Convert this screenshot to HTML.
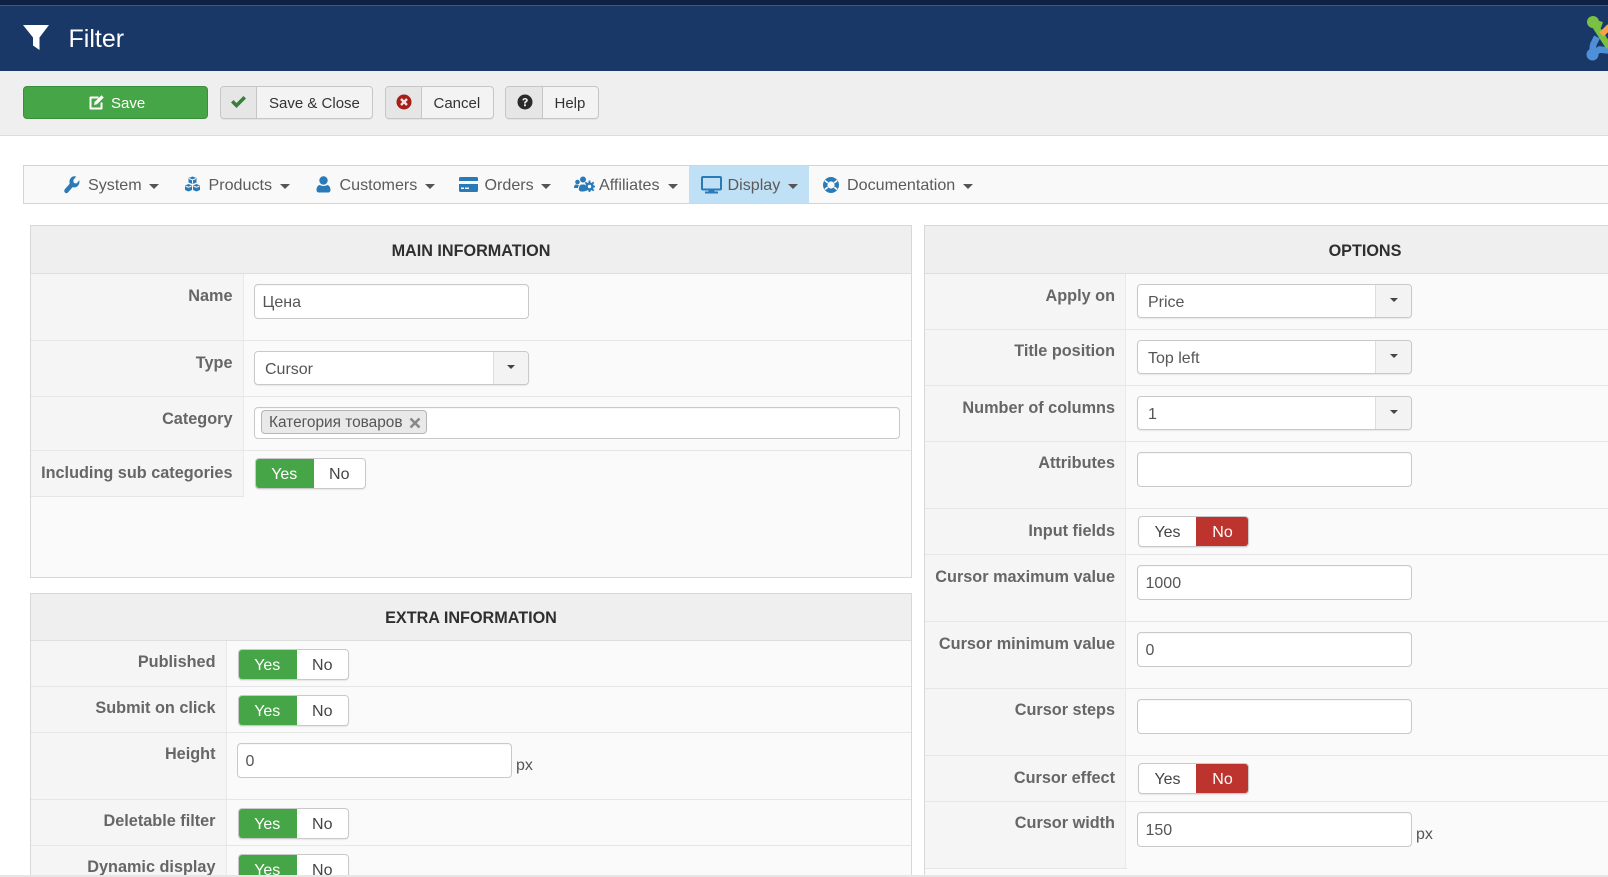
<!DOCTYPE html>
<html><head><meta charset="utf-8"><title>Filter</title>
<style>
html,body{margin:0;padding:0;width:1608px;height:877px;overflow:hidden;background:#fff}
body{font-family:"Liberation Sans","Noto Sans CJK SC",sans-serif;position:relative;color:#555;font-size:16px}
div,span,svg{position:absolute;box-sizing:border-box}
.t{white-space:nowrap;line-height:20px}
.tb{height:33px;top:86px;background:#f3f3f3;border:1px solid #c6c6c6;border-radius:4px;box-shadow:0 1px 0 #e4e4e4}
.ic{left:0;top:0;bottom:0;background:#e6e6e6;border-right:1px solid #c6c6c6;border-radius:3px 0 0 3px}
.tb .t{font-size:15px;color:#333;top:7px}
.m{font-size:16.1px;color:#5b5b5b;top:175px;white-space:nowrap;line-height:20px}
.c{width:0;height:0;border-left:5px solid transparent;border-right:5px solid transparent;border-top:5px solid #555;top:184px}
.p{background:#fafafa;border:1px solid #d8d8d8}
.h{background:#efefef;border-bottom:1px solid #dedede;left:0;right:0;top:0;height:48px}
.ht{font-weight:bold;font-size:16.2px;color:#2f2f2f;text-align:center;line-height:20px;white-space:nowrap}
.r{background:#e6e6e6;height:1px}
.lc{background:#f5f5f5;border-right:1px solid #e9e9e9}
.l{font-weight:bold;font-size:16.25px;color:#666;text-align:right;line-height:20px;white-space:nowrap}
.i{background:#fff;border:1px solid #c9c9c9;border-radius:4px;height:35px;font-size:16px;color:#555;line-height:35px;padding-left:7.5px;box-shadow:inset 0 1px 1px rgba(0,0,0,.04);white-space:nowrap}
.s{background:#fff;border:1px solid #c9c9c9;border-radius:4px;height:34px;font-size:16px;color:#555;line-height:35px;padding-left:10px;white-space:nowrap;box-shadow:0 1px 1px rgba(0,0,0,.08)}
.sb{right:0;top:0;bottom:0;background:#f3f3f3;border-left:1px solid #ddd;border-radius:0 3px 3px 0}
.sb:after{content:"";position:absolute;left:50%;top:13px;margin-left:-4px;border-left:4px solid transparent;border-right:4px solid transparent;border-top:4px solid #444}
.tg{height:31px;border-radius:4px;border:1px solid #c9c9c9;background:#fff;font-size:16px;text-align:center;color:#444;box-shadow:0 1px 1px rgba(0,0,0,.08);overflow:hidden}
.g,.rd,.w{top:-1px;bottom:-1px;color:#fff;line-height:33px}
.g{background:#46a546;left:-1px}
.rd{background:#bd342e;right:-1px}
.w{color:#444}
.px{font-size:16px;line-height:20px;color:#555}
</style></head><body>

<!-- top bars -->
<div style="left:0;top:0;width:1608px;height:5px;background:#0e2143"></div>
<div style="left:0;top:5px;width:1608px;height:1px;background:#3c5987"></div>
<div style="left:0;top:6px;width:1608px;height:65px;background:#1a3867"></div>
<svg style="left:22px;top:24px" width="28" height="27" viewBox="0 0 28 27"><path d="M1 1h26L17.500 13.500V26l-6.500-4.500v-8z" fill="#fff"/></svg>
<div class="t" style="left:68.5px;top:24px;font-size:25px;line-height:30px;color:#fff">Filter</div>
<svg style="left:1584px;top:12px" width="24" height="54" viewBox="0 0 24 54">
<path d="M13 25 9.500 32c-1 3-1 6-.5 9" stroke="#4f8fd8" stroke-width="6.500" fill="none"/>
<path d="M8.500 42l7-4.500 9 1" stroke="#4f8fd8" stroke-width="6.500" fill="none"/>
<circle cx="8.500" cy="42.500" r="6" fill="#4f8fd8"/>
<path d="M10 12l15 23" stroke="#7ac143" stroke-width="6.500" fill="none"/>
<path d="M9 10l9 3" stroke="#7ac143" stroke-width="6" fill="none"/>
<circle cx="9" cy="10" r="6" fill="#7ac143"/>
<path d="M17.500 22.500l8-8" stroke="#f7a24b" stroke-width="6"/>
</svg>

<!-- toolbar -->
<div style="left:0;top:71px;width:1608px;height:65px;background:#efefef;border-bottom:1px solid #dcdcdc"></div>
<div style="left:23px;top:86px;width:185px;height:33px;background:#46a546;border:1px solid #3b8f3b;border-radius:4px"></div>
<svg style="left:88px;top:94px" width="17" height="16" viewBox="0 0 17 16"><path d="M2.500 2.500h8v2h-7v9h9v-5h2v6a1 1 0 0 1-1 1H2.500a1 1 0 0 1-1-1v-11a1 1 0 0 1 1-1z" fill="#fff"/><path d="M6 11l.6-3L13.500 1.200l2.300 2.300L9 10.300z" fill="#fff"/></svg>
<div class="t" style="left:111px;top:94px;font-size:15px;color:#fff">Save</div>

<div class="tb" style="left:220px;width:153px"><div class="ic" style="width:36px"></div>
<svg style="left:9px;top:8px" width="17" height="14" viewBox="0 0 17 14"><path d="M1 7.500 3.500 5 6.500 8 13.500 1 16 3.500 6.500 13z" fill="#37803a"/></svg>
<div class="t" style="left:48px">Save &amp; Close</div></div>

<div class="tb" style="left:385px;width:109px"><div class="ic" style="width:36px"></div>
<svg style="left:10px;top:7px" width="16" height="16" viewBox="0 0 16 16"><circle cx="8" cy="8" r="7.500" fill="#a51f18"/><path d="M5 5l6 6M11 5l-6 6" stroke="#f0e4e4" stroke-width="2.400"/></svg>
<div class="t" style="left:47.500px">Cancel</div></div>

<div class="tb" style="left:505px;width:94px"><div class="ic" style="width:37px"></div>
<svg style="left:11px;top:7px" width="16" height="16" viewBox="0 0 16 16"><circle cx="8" cy="8" r="7.500" fill="#2a2a2a"/><path d="M5.300 6.200C5.500 4.700 6.700 4 8 4c1.500 0 2.800.9 2.800 2.300 0 1.900-2 1.800-2 3.200H7c0-2.200 2-2.200 2-3.200 0-.5-.4-.9-1-.9s-1 .4-1.100 1z" fill="#eee"/><rect x="7" y="10.300" width="1.900" height="1.900" fill="#eee"/></svg>
<div class="t" style="left:48.500px">Help</div></div>

<!-- menu -->
<div style="left:23px;top:165px;width:1600px;height:39px;background:#f9f9f9;border:1px solid #d4d4d4"></div>
<div style="left:689px;top:166px;width:120px;height:37px;background:#bfe0f5"></div>
<svg style="left:64px;top:176px" width="16" height="18" viewBox="0 0 16 16" preserveAspectRatio="none"><path d="M15.400 3.800 12.500 6.700 9.800 6.200 9.300 3.500 12.200.6C10.400-.1 8.300.3 6.900 1.700 5.500 3.100 5.100 5.100 5.700 6.900L.9 11.700a2.100 2.100 0 0 0 3 3l4.800-4.800c1.800.6 3.800.2 5.200-1.200 1.400-1.400 1.800-3.200 1.500-4.900z" fill="#2a7ab8"/></svg>
<div class="m" style="left:88px">System</div><div class="c" style="left:149px"></div>
<svg style="left:184px;top:176px" width="17" height="16" viewBox="0 0 17 16"><g fill="#2a7ab8"><path d="M8.500.5 12.500 2v4.500L8.500 8 4.500 6.500V2z"/><path d="M4.500 8 8 9.500V14L4.500 15.500 1 14V9.500z"/><path d="M12.500 8 16 9.500V14l-3.500 1.500L9 14V9.500z"/></g><path d="M5 2.500 8.500 4 12 2.500M8.500 4v3.500M1.500 10l3 1.300 3-1.300M9.500 10l3 1.300 3-1.300" stroke="#f9f9f9" stroke-width="1" fill="none"/></svg>
<div class="m" style="left:208.500px">Products</div><div class="c" style="left:280px"></div>
<svg style="left:316px;top:176px" width="15" height="17" viewBox="0 0 15 17"><circle cx="7.500" cy="4.500" r="4.200" fill="#2a7ab8"/><path d="M.5 14c0-3.500 2-5 3.500-5 1 .7 2.200 1 3.500 1s2.500-.3 3.500-1c1.500 0 3.500 1.500 3.500 5 0 1.500-1 2.500-2.500 2.500H3C1.500 16.500.5 15.500.5 14z" fill="#2a7ab8"/></svg>
<div class="m" style="left:339.500px">Customers</div><div class="c" style="left:425px"></div>
<svg style="left:459px;top:177px" width="19" height="15" viewBox="0 0 19 15"><rect x="0" y="0" width="19" height="15" rx="1.500" fill="#2a7ab8"/><rect x="0" y="4" width="19" height="3" fill="#f9f9f9"/><rect x="2" y="10.500" width="3" height="1.500" fill="#f9f9f9"/><rect x="6" y="10.500" width="4" height="1.500" fill="#f9f9f9"/></svg>
<div class="m" style="left:484.500px">Orders</div><div class="c" style="left:541px"></div>
<svg style="left:574px;top:176px" width="21" height="16" viewBox="0 0 21 16"><g fill="#2a7ab8"><circle cx="3.500" cy="6" r="2.300"/><circle cx="9" cy="3.500" r="3"/><path d="M0 12c0-2.500 1-3.500 2-3.500l3 .5c-.6 1-1 2-1 3z"/><path d="M4.800 14c0-4 1.500-5.500 3-5.500h3c.5 2 1 3 1.500 5.500l-2 1.500H6.500z"/><circle cx="15.500" cy="10.500" r="4.300"/><path d="M15.500 4.500v12M9.500 10.500h12M11.300 6.300l8.400 8.400M19.700 6.300l-8.400 8.400" stroke="#2a7ab8" stroke-width="1.800"/></g><circle cx="15.500" cy="10.500" r="1.700" fill="#f9f9f9"/></svg>
<div class="m" style="left:599px">Affiliates</div><div class="c" style="left:668px"></div>
<svg style="left:701px;top:176px" width="21" height="18" viewBox="0 0 21 18"><rect x="1" y="1" width="19" height="12.500" rx="1" fill="none" stroke="#2a7ab8" stroke-width="2"/><rect x="7.500" y="13.500" width="6" height="2" fill="#2a7ab8"/><rect x="4" y="15.500" width="13" height="2" fill="#2a7ab8"/></svg>
<div class="m" style="left:727.500px">Display</div><div class="c" style="left:788px"></div>
<svg style="left:823px;top:177px" width="16" height="16" viewBox="0 0 16 16"><circle cx="8" cy="8" r="8" fill="#2a7ab8"/><path d="M1.800 3.500l3 2.300M14.200 3.500l-3 2.300M1.800 12.500l3-2.300M14.200 12.500l-3-2.300" stroke="#f9f9f9" stroke-width="1.700"/><circle cx="8" cy="8" r="3.600" fill="#f9f9f9"/></svg>
<div class="m" style="left:847px">Documentation</div><div class="c" style="left:963px"></div>

<!-- MAIN panel -->
<div class="p" style="left:30px;top:225px;width:882px;height:353px"><div class="h"></div></div>
<div class="ht" style="left:30px;width:882px;top:241px">MAIN INFORMATION</div>
<div class="lc" style="left:31px;top:274px;width:213px;height:223px"></div>
<div class="r" style="left:31px;top:340px;width:880px"></div>
<div class="r" style="left:31px;top:396px;width:880px"></div>
<div class="r" style="left:31px;top:450px;width:880px"></div>
<div class="r" style="left:31px;top:496px;width:213px"></div>
<div class="l" style="left:31px;width:201.500px;top:286px">Name</div>
<div class="l" style="left:31px;width:201.500px;top:353px">Type</div>
<div class="l" style="left:31px;width:201.500px;top:409px">Category</div>
<div class="l" style="left:31px;width:201.500px;top:463px">Including sub categories</div>
<div class="i" style="left:254px;top:284px;width:275px">Цена</div>
<div class="s" style="left:254px;top:351px;width:275px">Cursor<div class="sb" style="width:35px"></div></div>
<div class="i" style="left:254px;top:407px;width:646px;height:32px"></div>
<div style="left:261px;top:410px;width:166px;height:24px;background:#e9e9e9;border:1px solid #b5b5b5;border-radius:4px"></div>
<div class="t" style="left:269px;top:412.500px;font-size:15.400px;color:#555">Категория товаров</div>
<svg style="left:409px;top:417px" width="12" height="12" viewBox="0 0 12 12"><path d="M1.500 1.500l9 9M10.500 1.500l-9 9" stroke="#888" stroke-width="2.600"/></svg>
<div class="tg" style="left:255px;top:458px;width:111px"><div class="g" style="width:58.500px">Yes</div><div class="w" style="left:57.500px;right:0">No</div></div>

<!-- EXTRA panel -->
<div class="p" style="left:30px;top:593px;width:882px;height:300px"><div class="h" style="height:47px"></div></div>
<div class="ht" style="left:30px;width:882px;top:608px">EXTRA INFORMATION</div>
<div class="lc" style="left:31px;top:641px;width:196px;height:250px"></div>
<div class="r" style="left:31px;top:686px;width:880px"></div>
<div class="r" style="left:31px;top:732px;width:880px"></div>
<div class="r" style="left:31px;top:799px;width:880px"></div>
<div class="r" style="left:31px;top:845px;width:880px"></div>
<div class="l" style="left:31px;width:184.500px;top:652px">Published</div>
<div class="l" style="left:31px;width:184.500px;top:698px">Submit on click</div>
<div class="l" style="left:31px;width:184.500px;top:744px">Height</div>
<div class="l" style="left:31px;width:184.500px;top:811px">Deletable filter</div>
<div class="l" style="left:31px;width:184.500px;top:857px">Dynamic display</div>
<div class="tg" style="left:238px;top:649px;width:111px"><div class="g" style="width:58.500px">Yes</div><div class="w" style="left:57.500px;right:0">No</div></div>
<div class="tg" style="left:238px;top:695px;width:111px"><div class="g" style="width:58.500px">Yes</div><div class="w" style="left:57.500px;right:0">No</div></div>
<div class="i" style="left:237px;top:743px;width:275px">0</div>
<div class="px" style="left:516px;top:756px">px</div>
<div class="tg" style="left:238px;top:808px;width:111px"><div class="g" style="width:58.500px">Yes</div><div class="w" style="left:57.500px;right:0">No</div></div>
<div class="tg" style="left:238px;top:854px;width:111px"><div class="g" style="width:58.500px">Yes</div><div class="w" style="left:57.500px;right:0">No</div></div>

<!-- OPTIONS panel -->
<div class="p" style="left:924px;top:225px;width:900px;height:670px"><div class="h"></div></div>
<div class="ht" style="left:1265px;width:200px;top:241px">OPTIONS</div>
<div class="lc" style="left:925px;top:274px;width:201px;height:594px"></div>
<div class="r" style="left:925px;top:329px;width:700px"></div>
<div class="r" style="left:925px;top:385px;width:700px"></div>
<div class="r" style="left:925px;top:441px;width:700px"></div>
<div class="r" style="left:925px;top:508px;width:700px"></div>
<div class="r" style="left:925px;top:554px;width:700px"></div>
<div class="r" style="left:925px;top:621px;width:700px"></div>
<div class="r" style="left:925px;top:688px;width:700px"></div>
<div class="r" style="left:925px;top:755px;width:700px"></div>
<div class="r" style="left:925px;top:801px;width:700px"></div>
<div class="r" style="left:925px;top:868px;width:202px"></div>
<div class="l" style="left:900px;width:215px;top:286px">Apply on</div>
<div class="l" style="left:900px;width:215px;top:341px">Title position</div>
<div class="l" style="left:900px;width:215px;top:398px">Number of columns</div>
<div class="l" style="left:900px;width:215px;top:453px">Attributes</div>
<div class="l" style="left:900px;width:215px;top:521px">Input fields</div>
<div class="l" style="left:900px;width:215px;top:567px">Cursor maximum value</div>
<div class="l" style="left:900px;width:215px;top:634px">Cursor minimum value</div>
<div class="l" style="left:900px;width:215px;top:700px">Cursor steps</div>
<div class="l" style="left:900px;width:215px;top:768px">Cursor effect</div>
<div class="l" style="left:900px;width:215px;top:813px">Cursor width</div>
<div class="s" style="left:1137px;top:284px;width:275px">Price<div class="sb" style="width:36px"></div></div>
<div class="s" style="left:1137px;top:340px;width:275px">Top left<div class="sb" style="width:36px"></div></div>
<div class="s" style="left:1137px;top:396px;width:275px">1<div class="sb" style="width:36px"></div></div>
<div class="i" style="left:1137px;top:452px;width:275px"></div>
<div class="tg" style="left:1138px;top:516px;width:111px"><div class="w" style="left:0;width:57px">Yes</div><div class="rd" style="width:53px">No</div></div>
<div class="i" style="left:1137px;top:565px;width:275px">1000</div>
<div class="i" style="left:1137px;top:632px;width:275px">0</div>
<div class="i" style="left:1137px;top:699px;width:275px"></div>
<div class="tg" style="left:1138px;top:763px;width:111px"><div class="w" style="left:0;width:57px">Yes</div><div class="rd" style="width:53px">No</div></div>
<div class="i" style="left:1137px;top:812px;width:275px">150</div>
<div class="px" style="left:1416px;top:825px">px</div>

<!-- bottom strip -->
<div style="left:0;top:875px;width:1608px;height:2px;background:#e6e6e6"></div>
</body></html>
